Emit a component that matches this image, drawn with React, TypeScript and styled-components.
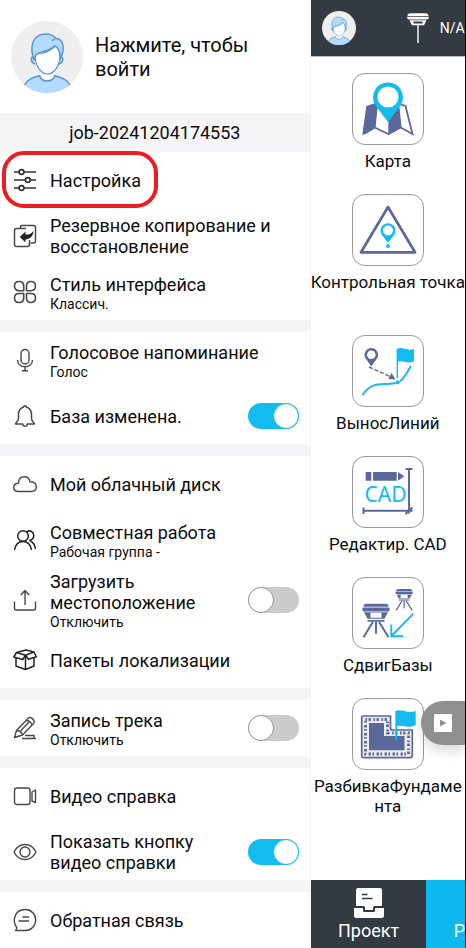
import React, { useState } from 'react';
import styled, { createGlobalStyle } from 'styled-components';

const PURPLE = '#5b689b';
const CYAN = '#12bcef';
const SLATE = '#343a42';

const GlobalStyle = createGlobalStyle`
  * { box-sizing: border-box; }
  body {
    margin: 0;
    background: #fff;
    color: #0c0c0c;
    font-family: Roboto, "Noto Sans", sans-serif;
  }
  button {
    font: inherit;
    color: inherit;
    background: none;
    border: 0;
    padding: 0;
    cursor: pointer;
  }
  svg { display: block; flex: none; }
`;

const Page = styled.div`
  display: grid;
  grid-template-columns: 2fr 1fr;
  min-height: 100vh;
  overflow: hidden;
`;

/* ---------- drawer ---------- */

const Drawer = styled.aside`
  display: flex;
  flex-direction: column;
  min-width: 0;
  border-right: 1px solid #f3f3f5;
  background: #fff;
`;

const Profile = styled.button`
  display: flex;
  align-items: center;
  gap: 12px;
  height: 113px;
  padding: 0 48px 0 11px;
  text-align: left;
  font-size: 20px;
  line-height: 24px;
`;

const JobName = styled.div`
  height: 39px;
  line-height: 39px;
  background: #f5f5f7;
  text-align: center;
  font-size: 18px;
`;

const Section = styled.section`
  border-bottom: 12px solid #f5f5f7;
  &:last-child { border-bottom: 0; }
`;

const rowLayout = `
  position: relative;
  display: flex;
  align-items: center;
  gap: 13px;
  width: 100%;
  min-height: 56px;
  padding: 0 11px 0 13px;
  text-align: left;
  cursor: pointer;
`;

const RowButton = styled.button`${rowLayout}`;
const RowLabel = styled.label`${rowLayout}`;

const RowText = styled.span<{ $hasNote: boolean }>`
  flex: 1;
  min-width: 0;
  padding-top: ${(p) => (p.$hasNote ? 3 : 0)}px;
`;

const Title = styled.span`
  display: block;
  font-size: 18px;
  line-height: 21px;
`;

const Note = styled.span`
  display: block;
  font-size: 14px;
  line-height: 19px;
`;

const Highlight = styled.span`
  position: absolute;
  top: -1px;
  left: 2px;
  width: 156px;
  height: 57px;
  border: 4px solid #ec1c24;
  border-radius: 22px;
  pointer-events: none;
`;

const Toggle = styled.input`
  appearance: none;
  flex: none;
  display: flex;
  align-items: center;
  width: 51px;
  height: 26px;
  margin: 0;
  border-radius: 13px;
  background: #cbcbcb;
  cursor: pointer;
  &::before {
    content: '';
    box-sizing: border-box;
    width: 26px;
    height: 26px;
    border: 1px solid #999;
    border-radius: 50%;
    background: #fff;
  }
  &:checked {
    justify-content: flex-end;
    background: ${CYAN};
  }
  &:checked::before { border-color: ${CYAN}; }
`;

/* ---------- main screen ---------- */

const Screen = styled.main`
  position: relative;
  display: flex;
  flex-direction: column;
  min-width: 0;
  overflow: hidden;
  border-right: 1px solid #000;
`;

const TopBar = styled.header`
  display: flex;
  align-items: center;
  height: 57px;
  padding-left: 11px;
  background: ${SLATE};
  border-bottom: 1px solid #b9bbbe;
  color: #fff;
  font-size: 14px;
`;

const AvatarButton = styled.button`
  margin-right: 51px;
`;

const Status = styled.span`
  margin-left: 11px;
  white-space: nowrap;
`;

const Tiles = styled.div`
  display: flex;
  flex: 1;
  flex-direction: column;
  padding-top: 16px;
`;

const Tile = styled.button<{ $tall: boolean }>`
  display: flex;
  flex-direction: column;
  align-items: center;
  gap: 6px;
  min-height: ${(p) => (p.$tall ? 141 : 121)}px;
`;

const TileIcon = styled.span`
  width: 72px;
  height: 72px;
  border: 1px solid #999;
  border-radius: 13px;
`;

const TileLabel = styled.span`
  font-size: 17px;
  line-height: 20px;
  text-align: center;
  white-space: pre;
`;

const BottomNav = styled.nav`
  display: grid;
  grid-template-columns: 3fr 1fr;
  height: 68px;
`;

const NavButton = styled.button<{ $active?: boolean }>`
  display: flex;
  flex-direction: column;
  align-items: ${(p) => (p.$active ? 'flex-end' : 'center')};
  justify-content: flex-end;
  gap: 2px;
  min-width: 0;
  padding-bottom: 6px;
  overflow: hidden;
  background: ${(p) => (p.$active ? '#0cb9ee' : SLATE)};
  color: #fff;
  font-size: 18px;
  line-height: 22px;
`;

const VideoButton = styled.button`
  position: absolute;
  top: 701px;
  right: 0;
  display: flex;
  align-items: center;
  width: 44px;
  height: 44px;
  padding-left: 13px;
  border-radius: 22px 0 0 22px;
  background: #8f8f8f;
  box-shadow: 0 6px 12px rgba(0, 0, 0, 0.14);
`;

/* ---------- drawings ---------- */

function Avatar({ size }: { size: number }) {
  return (
    <svg width={size} height={size} viewBox="0 0 72 72" aria-hidden="true">
      <circle cx="36" cy="36" r="36" fill="#efefef" />
      <path d="M14 64C17 57 25 56 31 54H41C48 56 55 57 58.500 64C52 70 44 72 36 72S20 70 14 64Z" fill="#b3daff" />
      <path d="M13.500 64C17 57 25 56 31 54M41 54C48 56 55 57 59 64" fill="none" stroke="#5a96d0" strokeWidth="1.500" />
      <path d="M29 48V54C30 62 42 62 43.500 54V48Z" fill="#fff" />
      <path d="M28.500 54C30 62 42 62 44 54" fill="none" stroke="#5a96d0" strokeWidth="1.500" />
      <path d="M22 36C19 36 20 42 24 43M50 36C53 36 52 42 48 43" fill="#b3daff" stroke="#5a96d0" strokeWidth="1.500" />
      <path d="M24 34C26 31 27 33 32 32C37 31 41 28 44 25C47 27 49 29 49 34C49 45 43 53 36.500 53S24 45 24 34Z" fill="#fff" stroke="#5a96d0" strokeWidth="1.200" />
      <path d="M23 39C18 25 22 13 35 13C40 13 43 15 45 17.500C53 18 54 28 49.500 38C50 31 47 27 44 24.500C40 30 31 30 26 33C24 34 24 37 23 39Z" fill="#b3daff" stroke="#5a96d0" strokeWidth="1.500" strokeLinejoin="round" />
      <path d="M45 17.500C43 18 42 19 41 20" fill="none" stroke="#5a96d0" strokeWidth="1.200" />
    </svg>
  );
}

const drawerIcons = {
  settings: (
    <g stroke="#333" strokeWidth="1.700">
      <path d="M1 4H6M11 4H23M1 12H12M17.500 12H23M1 20H6M11 20H23" />
      <circle cx="8.500" cy="4" r="2.400" />
      <circle cx="14.800" cy="12" r="2.400" />
      <circle cx="8.500" cy="20" r="2.400" />
    </g>
  ),
  backup: (
    <g strokeWidth="1.500">
      <path d="M7.500 4V3C7.500 2 8 1.500 9 1.500H20.500Q22.500 1.500 22.500 3.500V17Q22.500 19 20.500 19H17.500" />
      <path d="M13 4.500H3.500Q1.500 4.500 1.500 6.500V20.500Q1.500 22.500 3.500 22.500H14.500Q16.500 22.500 16.500 20.500V16" />
      <path d="M6.800 13L12.500 7.500V10.600C16 10.800 18.500 9.500 20.500 7C20.300 12 17 15.300 12.500 15.400V18.500Z" fill="#222" stroke="none" />
    </g>
  ),
  style: (
    <path
      strokeWidth="1.600"
      d="M10.700 10.700H6C3.200 10.700 1.500 8.800 1.500 6.100S3.400 1.500 6.100 1.500S10.700 3.300 10.700 6.100ZM13.500 10.700V6.100C13.500 3.300 15.300 1.500 18 1.500S22.500 3.400 22.500 6.100S20.800 10.700 18 10.700ZM10.700 13.500V18C10.700 20.800 8.800 22.500 6.100 22.500S1.500 20.700 1.500 18S3.200 13.500 6 13.500ZM13.500 13.500H18C20.800 13.500 22.500 15.300 22.500 18S20.700 22.500 18 22.500S13.500 20.700 13.500 18Z"
    />
  ),
  mic: (
    <g>
      <rect x="8" y="1.500" width="8" height="14.500" rx="4" />
      <path d="M4.500 12C4.500 21 19.500 21 19.500 12M12 19V22.500M9 22.700H15" />
    </g>
  ),
  bell: (
    <path
      strokeWidth="1.500"
      d="M2.500 20C2.500 18.300 5.500 18 5.500 14V10.500C5.500 6.500 7.500 4 10.500 3.200C10.700 1.400 13.300 1.400 13.500 3.200C16.500 4 18.500 6.500 18.500 10.500V14C18.500 18 21.500 18.300 21.500 20H14.300C14 23 10 23 9.700 20Z"
    />
  ),
  cloud: (
    <path d="M5.500 19.500C2 19.500 .7 17.500 .7 15.500C.7 13 2.500 11.300 5.500 11.300C5.500 7 8 4.700 11.500 4.700C14.800 4.700 16.500 6.500 17 9.800C21 9.800 23.300 11.800 23.300 14.800C23.300 17.500 21.500 19.500 18.500 19.500Z" />
  ),
  people: (
    <g stroke="#222" strokeWidth="1.500">
      <circle cx="10" cy="8" r="5.300" />
      <path d="M1.500 22C2.500 16.500 5.500 13.500 10 13.500S17.500 16.500 18.500 22M13.800 3.800C17 1.500 20.800 4 20.800 7.500C20.800 10.500 19 12 16 12.500M17.500 13C20.500 14.500 22 17.500 22.500 21" />
    </g>
  ),
  upload: (
    <path d="M12 17V2.500M7.800 7L12 2.500L16.200 7M1.500 13.500V20Q1.500 22 3.500 22H20.500Q22.500 22 22.500 20V13.500" />
  ),
  box: (
    <g stroke="#222" strokeWidth="1.500">
      <path d="M3.500 4.500L13 2L21 4L12.500 7.200ZM3.500 4.500L.8 9L9.800 11.500L12.500 7.200L15.500 11.300L23.300 8.800L21 4" />
      <path d="M3 10V18L12.500 21.500L21 18V10M12.500 7.500V21.500" />
    </g>
  ),
  pencil: (
    <g>
      <path d="M1.500 21.500L3.500 14.500L15.500 2C17.500 .5 22 3.500 21 7L9.500 19ZM3.500 14.500C6 14.500 8.500 16.500 9.500 19M13.500 4.500C16 4.500 18.500 6.500 19 9M6.500 16L16.500 5.500" />
      <path d="M9 22.500H23M12 19.500H21V22.500" />
    </g>
  ),
  video: (
    <g>
      <rect x="1.500" y="4" width="15.500" height="16.500" rx="2.500" />
      <path d="M22.500 6V18.500L19 17V8Z" />
    </g>
  ),
  eye: (
    <g>
      <path d="M1 12C6 2 18 2 23 12C18 22 6 22 1 12Z" />
      <circle cx="12" cy="12" r="5" />
    </g>
  ),
  feedback: (
    <path d="M4 20C-1 14 1 1.500 12 1.500C18 1.500 22.700 6 22.700 12S18 22.500 12 22.500H2.500ZM9.500 9H16M5.500 13H16" />
  ),
};

type DrawerIconName = keyof typeof drawerIcons;

function DrawerIcon({ name }: { name: DrawerIconName }) {
  return (
    <svg width="24" height="24" viewBox="0 0 24 24" fill="none" stroke="#484848" strokeWidth="1.400" strokeLinejoin="round" aria-hidden="true">
      {drawerIcons[name]}
    </svg>
  );
}

function Pin({ x, y, r, hole, tip, color }: { x: number; y: number; r: number; hole: number; tip: number; color: string }) {
  const side = r * 0.88;
  const low = y + r * 0.5;
  return (
    <g>
      <path d={`M${x} ${tip}L${x - side} ${low}A${r} ${r} 0 1 1 ${x + side} ${low}Z`} fill={color} />
      <circle cx={x} cy={y} r={hole} fill="#fff" />
    </g>
  );
}

function Tripod() {
  return (
    <g fill={PURPLE}>
      <path d="M1 3Q1 0 4 0H23Q26 0 26 3Z" />
      <rect x="0" y="3.800" width="27" height="4" rx="1" />
      <path d="M1.500 8.500H25.500L22 15H5Z" />
      <rect x="8" y="9" width="11" height="5" fill="#fff" />
      <path d="M5 16.300H22V18H5Z" />
      <path d="M10.500 18L1 33.500M13.500 18V30M16.500 18L26 33.500" stroke={PURPLE} strokeWidth="2" fill="none" />
    </g>
  );
}

const tileDrawings = {
  map: (
    <g>
      <path d="M11 60L21.700 53.500L35.300 60L47.700 53.500L59.500 60L52.500 32L47.700 30.500M21.700 53.500L24 30M47.700 53.500L45.500 33" fill="none" stroke={PURPLE} strokeWidth="1.800" />
      <path d="M13.300 32L24 28.500L21.500 54L9.300 61ZM35.300 46L46 33L48 54L35.300 61Z" fill={PURPLE} />
      <Pin x={35} y={23} r={15} hole={10.500} tip={48} color={CYAN} />
    </g>
  ),
  control: (
    <g>
      <path d="M35 12L8 57.300H62Z" fill="none" stroke={PURPLE} strokeWidth="2.700" strokeLinejoin="round" />
      <Pin x={35} y={35.500} r={7.500} hole={5} tip={48} color={CYAN} />
      <circle cx="35" cy="51" r="2" fill={CYAN} />
    </g>
  ),
  stake: (
    <g>
      <Pin x={18.300} y={18.700} r={6.800} hole={4.300} tip={30.500} color={PURPLE} />
      <path d="M16 31L38 41" stroke={PURPLE} strokeWidth="1.400" strokeDasharray="4 2" />
      <path d="M35.300 43L38.500 37L42.500 43.500Z" fill={PURPLE} />
      <path d="M10 58.500C19 44 31 50 42 47M47.500 45C51 42 54 37 57.500 30.500" fill="none" stroke={CYAN} strokeWidth="2" strokeLinecap="round" />
      <path d="M44.300 13V42" stroke={CYAN} strokeWidth="1.500" />
      <path d="M44.300 12.700C50 10.500 54 15.500 61 13V25.500C54 28.500 50 23.500 44.300 26Z" fill={CYAN} />
      <circle cx="44.700" cy="46.300" r="2" fill={CYAN} />
    </g>
  ),
  cad: (
    <g>
      <path d="M12.700 15H18.300V23.700H12.700ZM20 15H43.700V23.700H20ZM45 15L51.300 19.300L45 23.700Z" fill={PURPLE} />
      <path d="M56 12V56.500M52.500 12H59.500M10.500 53.700H59.500M10.500 50.500V57M52.500 57L59.500 50.500" stroke={PURPLE} strokeWidth="2" />
      <text x="11.500" y="45" fill={CYAN} fontFamily="Noto Sans, sans-serif" fontSize="21">CAD</text>
    </g>
  ),
  shift: (
    <g>
      <g transform="translate(9.500 25.700)"><Tripod /></g>
      <g transform="translate(42.500 11) scale(.64)"><Tripod /></g>
      <path d="M60.300 35.700L38.500 58M38.300 46.500V58.300H50" fill="none" stroke={CYAN} strokeWidth="1.900" />
    </g>
  ),
  foundation: (
    <g>
      <path d="M10.500 17H37.500V29Q37.500 31 39.500 31H59.300V56.500Q59.300 58.700 57 58.700H10.500Q8.700 58.700 8.700 56.500V19Q8.700 17 10.500 17Z" fill="#ececef" stroke={PURPLE} strokeWidth="1.700" />
      <path d="M16 24H31V37H51.500V51.300H16Z" fill={PURPLE} />
      <path d="M12.500 20.500H34.500V34H55.500V55H12.500Z" fill="none" stroke={PURPLE} strokeWidth="2.800" strokeDasharray="1.600 1.500 2.300 2.600" />
      <path d="M43.300 12V41.500" stroke={CYAN} strokeWidth="1.700" />
      <path d="M42.700 12C49 9 54 15 62.700 12V26C54 30.500 49 24.500 42.700 28Z" fill={CYAN} />
    </g>
  ),
};

type TileName = keyof typeof tileDrawings;

function ReceiverIcon() {
  return (
    <svg width="22" height="30" viewBox="0 0 22 30" fill="#fff" aria-hidden="true">
      <path d="M.5 3Q.5 .3 3.500 .3H18.500Q21.500 .3 21.500 3ZM0 3.800H22Q22 6.500 20 6.500H2Q0 6.500 0 3.800Z" />
      <path d="M2.500 7.200H19.500L17 12.300H5ZM10.300 12H11.700V30H10.300Z" />
      <path d="M6.500 8.500H15.500V10.500H6.500Z" fill={SLATE} />
    </svg>
  );
}

function ProjectIcon() {
  return (
    <svg width="30" height="30" viewBox="0 0 30 30" fill="#fff" aria-hidden="true">
      <path d="M2 18V2Q2 0 4 0H26Q28 0 28 2V18H20.500Q19 18 19 20V22H11V20Q11 18 9.500 18Z" />
      <path d="M0 20H9V22.500Q9 24 10.500 24H19.500Q21 24 21 22.500V20H30V27.500Q30 30 27.500 30H2.500Q0 30 0 27.500Z" />
      <path d="M8 6.500H13.500M8 10.500H18.500" stroke={SLATE} strokeWidth="1.500" />
    </svg>
  );
}

/* ---------- data ---------- */

interface Item {
  icon: DrawerIconName;
  title: string;
  note?: string;
  toggle?: boolean;
  highlighted?: boolean;
}

const sections: Item[][] = [
  [
    { icon: 'settings', title: 'Настройка', highlighted: true },
    { icon: 'backup', title: 'Резервное копирование и восстановление' },
    { icon: 'style', title: 'Стиль интерфейса', note: 'Классич.' },
  ],
  [
    { icon: 'mic', title: 'Голосовое напоминание', note: 'Голос' },
    { icon: 'bell', title: 'База изменена.', toggle: true },
  ],
  [
    { icon: 'cloud', title: 'Мой облачный диск' },
    { icon: 'people', title: 'Совместная работа', note: 'Рабочая группа -' },
    { icon: 'upload', title: 'Загрузить местоположение', note: 'Отключить', toggle: false },
    { icon: 'box', title: 'Пакеты локализации' },
  ],
  [{ icon: 'pencil', title: 'Запись трека', note: 'Отключить', toggle: false }],
  [
    { icon: 'video', title: 'Видео справка' },
    { icon: 'eye', title: 'Показать кнопку видео справки', toggle: true },
  ],
  [{ icon: 'feedback', title: 'Обратная связь' }],
];

const tiles: { icon: TileName; label: string; tall?: boolean }[] = [
  { icon: 'map', label: 'Карта' },
  { icon: 'control', label: 'Контрольная точка', tall: true },
  { icon: 'stake', label: 'ВыносЛиний' },
  { icon: 'cad', label: 'Редактир. CAD' },
  { icon: 'shift', label: 'СдвигБазы' },
  { icon: 'foundation', label: 'РазбивкаФундаме\nнта' },
];

function MenuRow({ item }: { item: Item }) {
  const [on, setOn] = useState(Boolean(item.toggle));
  const body = (
    <>
      <DrawerIcon name={item.icon} />
      <RowText $hasNote={Boolean(item.note)}>
        <Title>{item.title}</Title>
        {item.note && <Note>{item.note}</Note>}
      </RowText>
      {item.highlighted && <Highlight />}
    </>
  );
  if (item.toggle === undefined) return <RowButton type="button">{body}</RowButton>;
  return (
    <RowLabel>
      {body}
      <Toggle type="checkbox" checked={on} onChange={(e) => setOn(e.target.checked)} />
    </RowLabel>
  );
}

export default function App() {
  return (
    <>
      <GlobalStyle />
      <Page>
        <Drawer>
          <Profile type="button">
            <Avatar size={72} />
            <span>Нажмите, чтобы войти</span>
          </Profile>
          <JobName>job-20241204174553</JobName>
          {sections.map((items) => (
            <Section key={items[0].title}>
              {items.map((item) => (
                <MenuRow key={item.title} item={item} />
              ))}
            </Section>
          ))}
        </Drawer>
        <Screen>
          <TopBar>
            <AvatarButton type="button" aria-label="Профиль">
              <Avatar size={34} />
            </AvatarButton>
            <ReceiverIcon />
            <Status>N/A</Status>
          </TopBar>
          <Tiles>
            {tiles.map((tile) => (
              <Tile key={tile.icon} type="button" $tall={Boolean(tile.tall)}>
                <TileIcon>
                  <svg width="70" height="70" viewBox="0 0 70 70" aria-hidden="true">
                    {tileDrawings[tile.icon]}
                  </svg>
                </TileIcon>
                <TileLabel>{tile.label}</TileLabel>
              </Tile>
            ))}
          </Tiles>
          <BottomNav>
            <NavButton type="button">
              <ProjectIcon />
              Проект
            </NavButton>
            <NavButton type="button" $active>
              Р
            </NavButton>
          </BottomNav>
          <VideoButton type="button" aria-label="Видео справка">
            <svg width="18" height="18" viewBox="0 0 18 18" aria-hidden="true">
              <rect width="18" height="18" rx="1" fill="#fff" />
              <path d="M6 5.500L12.500 9L6 12.500Z" fill="#8f8f8f" />
            </svg>
          </VideoButton>
        </Screen>
      </Page>
    </>
  );
}
